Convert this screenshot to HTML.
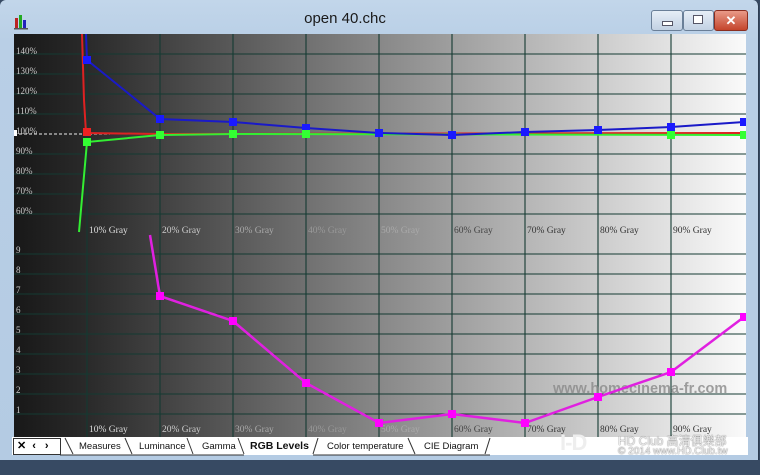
<!DOCTYPE html>
<html><head><meta charset="utf-8"><style>
body{margin:0;width:760px;height:475px;overflow:hidden;background:#374a63;font-family:"Liberation Sans",sans-serif;position:relative}
.frame{position:absolute;left:0;top:0;width:758px;height:460px;background:linear-gradient(#c2d6ea,#b9cfe6 40px,#b4cbe3);border-radius:6px 6px 0 0;border-right:1px solid #2d3d52}
.title{position:absolute;left:0;width:690px;top:10px;text-align:center;font-size:15px;color:#1a1a1a}
.btn{position:absolute;top:10px;height:19px;border:1px solid #6a7f98;border-radius:3px;background:linear-gradient(#e6eef7,#c2d1e3)}
.tabs{position:absolute;left:12px;top:437px;width:736px;height:18px;background:#fff}
.tab{position:absolute;top:441px;font-size:9.5px;color:#111;white-space:nowrap}
</style></head><body>
<div class="frame"></div>
<svg style="position:absolute;left:14px;top:14px" width="18" height="16"><rect x="1" y="4" width="3" height="11" fill="#b22"/><rect x="5" y="1" width="3" height="14" fill="#2a2"/><rect x="9" y="6" width="3" height="9" fill="#22b"/><rect x="0" y="14" width="14" height="1.5" fill="#555"/></svg>
<div class="title">open 40.chc</div>
<div class="btn" style="left:651px;width:30px"><div style="position:absolute;left:10px;top:10px;width:9px;height:3px;background:#fff;border:1px solid #556"></div></div>
<div class="btn" style="left:683px;width:29px"><div style="position:absolute;left:9px;top:4px;width:8px;height:7px;border:1px solid #556;background:#fff"></div></div>
<div class="btn" style="left:714px;width:32px;background:linear-gradient(#e99a88,#c4452c);border-color:#8a2e20;color:#fff;font-weight:bold;text-align:center;font-size:13px;line-height:19px">✕</div>
<svg style="position:absolute;left:14px;top:34px" width="732" height="403" viewBox="14 34 732 403">
<defs><linearGradient id="g" x1="0" x2="1"><stop offset="0" stop-color="#181818"/><stop offset="0.1" stop-color="#2a2a2a"/><stop offset="0.5" stop-color="#888"/><stop offset="1" stop-color="#fafafa"/></linearGradient></defs>
<rect x="14" y="34" width="732" height="403" fill="url(#g)"/>
<g stroke="#143a32" stroke-width="1.1">
<line x1="87" y1="34" x2="87" y2="437"/><line x1="160" y1="34" x2="160" y2="437"/><line x1="233" y1="34" x2="233" y2="437"/><line x1="306" y1="34" x2="306" y2="437"/><line x1="379" y1="34" x2="379" y2="437"/><line x1="452" y1="34" x2="452" y2="437"/><line x1="525" y1="34" x2="525" y2="437"/><line x1="598" y1="34" x2="598" y2="437"/><line x1="671" y1="34" x2="671" y2="437"/>
<line x1="14" y1="54" x2="746" y2="54"/><line x1="14" y1="74" x2="746" y2="74"/><line x1="14" y1="94" x2="746" y2="94"/><line x1="14" y1="114" x2="746" y2="114"/><line x1="14" y1="154" x2="746" y2="154"/><line x1="14" y1="174" x2="746" y2="174"/><line x1="14" y1="194" x2="746" y2="194"/><line x1="14" y1="214" x2="746" y2="214"/>
<line x1="14" y1="254" x2="746" y2="254"/><line x1="14" y1="274" x2="746" y2="274"/><line x1="14" y1="294" x2="746" y2="294"/><line x1="14" y1="314" x2="746" y2="314"/><line x1="14" y1="334" x2="746" y2="334"/><line x1="14" y1="354" x2="746" y2="354"/><line x1="14" y1="374" x2="746" y2="374"/><line x1="14" y1="394" x2="746" y2="394"/><line x1="14" y1="414" x2="746" y2="414"/>
</g>
<g font-family="Liberation Serif,serif" font-size="9" fill="#ccc">
<text x="16" y="54">140%</text><text x="16" y="74">130%</text><text x="16" y="94">120%</text><text x="16" y="114">110%</text><text x="16" y="134">100%</text><text x="16" y="154">90%</text><text x="16" y="174">80%</text><text x="16" y="194">70%</text><text x="16" y="214">60%</text>
<text x="16" y="253">9</text><text x="16" y="273">8</text><text x="16" y="293">7</text><text x="16" y="313">6</text><text x="16" y="333">5</text><text x="16" y="353">4</text><text x="16" y="373">3</text><text x="16" y="393">2</text><text x="16" y="413">1</text>
</g>
<g font-family="Liberation Serif,serif" font-size="9.5">
<text x="89" y="233" fill="#ddd">10% Gray</text><text x="162" y="233" fill="#ccc">20% Gray</text><text x="235" y="233" fill="#aaa">30% Gray</text><text x="308" y="233" fill="#999">40% Gray</text><text x="381" y="233" fill="#aaa">50% Gray</text><text x="454" y="233" fill="#444">60% Gray</text><text x="527" y="233" fill="#333">70% Gray</text><text x="600" y="233" fill="#333">80% Gray</text><text x="673" y="233" fill="#333">90% Gray</text>
<text x="89" y="432" fill="#ddd">10% Gray</text><text x="162" y="432" fill="#ccc">20% Gray</text><text x="235" y="432" fill="#aaa">30% Gray</text><text x="308" y="432" fill="#999">40% Gray</text><text x="381" y="432" fill="#aaa">50% Gray</text><text x="454" y="432" fill="#444">60% Gray</text><text x="527" y="432" fill="#333">70% Gray</text><text x="600" y="432" fill="#333">80% Gray</text><text x="673" y="432" fill="#333">90% Gray</text>
</g>
<line x1="14" y1="134" x2="110" y2="134" stroke="#eee" stroke-dasharray="3,2"/>
<rect x="14" y="130" width="3" height="6" fill="#fff"/>
<polyline points="82,34 84,100 86,133 160,134 744,133" fill="none" stroke="#d22" stroke-width="2"/>
<polyline points="79,232 87,142 160,135 233,134 744,135" fill="none" stroke="#3e3" stroke-width="2"/>
<polyline points="86,34 87,60 160,119 233,122 306,128 379,133 452,135 525,132 598,130 671,127 744,122" fill="none" stroke="#1a1ac8" stroke-width="2"/>
<g fill="#1a1aff"><rect x="83" y="56" width="8" height="8"/><rect x="156" y="115" width="8" height="8"/><rect x="229" y="118" width="8" height="8"/><rect x="302" y="124" width="8" height="8"/><rect x="375" y="129" width="8" height="8"/><rect x="448" y="131" width="8" height="8"/><rect x="521" y="128" width="8" height="8"/><rect x="594" y="126" width="8" height="8"/><rect x="667" y="123" width="8" height="8"/><rect x="740" y="118" width="6" height="8"/></g>
<rect x="83" y="128" width="8" height="8" fill="#e22"/>
<g fill="#3f3"><rect x="83" y="138" width="8" height="8"/><rect x="156" y="131" width="8" height="8"/><rect x="229" y="130" width="8" height="8"/><rect x="302" y="130" width="8" height="8"/><rect x="667" y="131" width="8" height="8"/><rect x="740" y="131" width="6" height="8"/></g>
<text x="553" y="393" font-family="Liberation Sans,sans-serif" font-size="14.5" font-weight="bold" fill="#8a8a8a" opacity="0.8">www.homecinema-fr.com</text>
<polyline points="150,235 160,296 233,321 306,383 379,423 452,414 525,423 598,397 671,372 744,317" fill="none" stroke="#e020e0" stroke-width="2.5"/>
<g fill="#f0f"><rect x="156" y="292" width="8" height="8"/><rect x="229" y="317" width="8" height="8"/><rect x="302" y="379" width="8" height="8"/><rect x="375" y="419" width="8" height="8"/><rect x="448" y="410" width="8" height="8"/><rect x="521" y="419" width="8" height="8"/><rect x="594" y="393" width="8" height="8"/><rect x="667" y="368" width="8" height="8"/><rect x="740" y="313" width="6" height="8"/></g>
</svg>
<div class="tabs"></div>
<div style="position:absolute;left:13px;top:438px;width:46px;height:15px;border:1px solid #333;font-size:11px;font-weight:bold;line-height:15px;background:#fff"><span style="margin-left:3px">✕</span><span style="margin-left:6px">‹</span><span style="margin-left:9px">›</span></div>
<svg style="position:absolute;left:0;top:437px" width="500" height="19"><g fill="none" stroke="#333"><line x1="65" y1="1" x2="73" y2="17"/><line x1="125" y1="1" x2="132" y2="17"/><line x1="187" y1="1" x2="193" y2="17"/><line x1="238" y1="1" x2="244" y2="17"/><line x1="313" y1="17" x2="318" y2="1"/><line x1="408" y1="1" x2="415" y2="17"/><line x1="485" y1="17" x2="490" y2="1"/><line x1="60" y1="18" x2="244" y2="18"/><line x1="313" y1="18" x2="490" y2="18"/></g></svg>
<span class="tab" style="left:79px">Measures</span><span class="tab" style="left:139px">Luminance</span><span class="tab" style="left:202px">Gamma</span><span class="tab" style="left:250px;font-weight:bold;font-size:10.5px;top:440px">RGB Levels</span><span class="tab" style="left:327px">Color temperature</span><span class="tab" style="left:424px">CIE Diagram</span>
<div style="position:absolute;left:560px;top:430px;font-size:22px;font-weight:bold;color:#eee;letter-spacing:-1px">I-D</div>
<div style="position:absolute;left:618px;top:432px;font-size:12px;color:#eee;text-shadow:0 0 1px #333">HD Club 高清俱樂部</div>
<div style="position:absolute;left:618px;top:446px;font-size:10px;color:#eee;text-shadow:0 0 1px #333">© 2014 www.HD.Club.tw</div>
</body></html>
